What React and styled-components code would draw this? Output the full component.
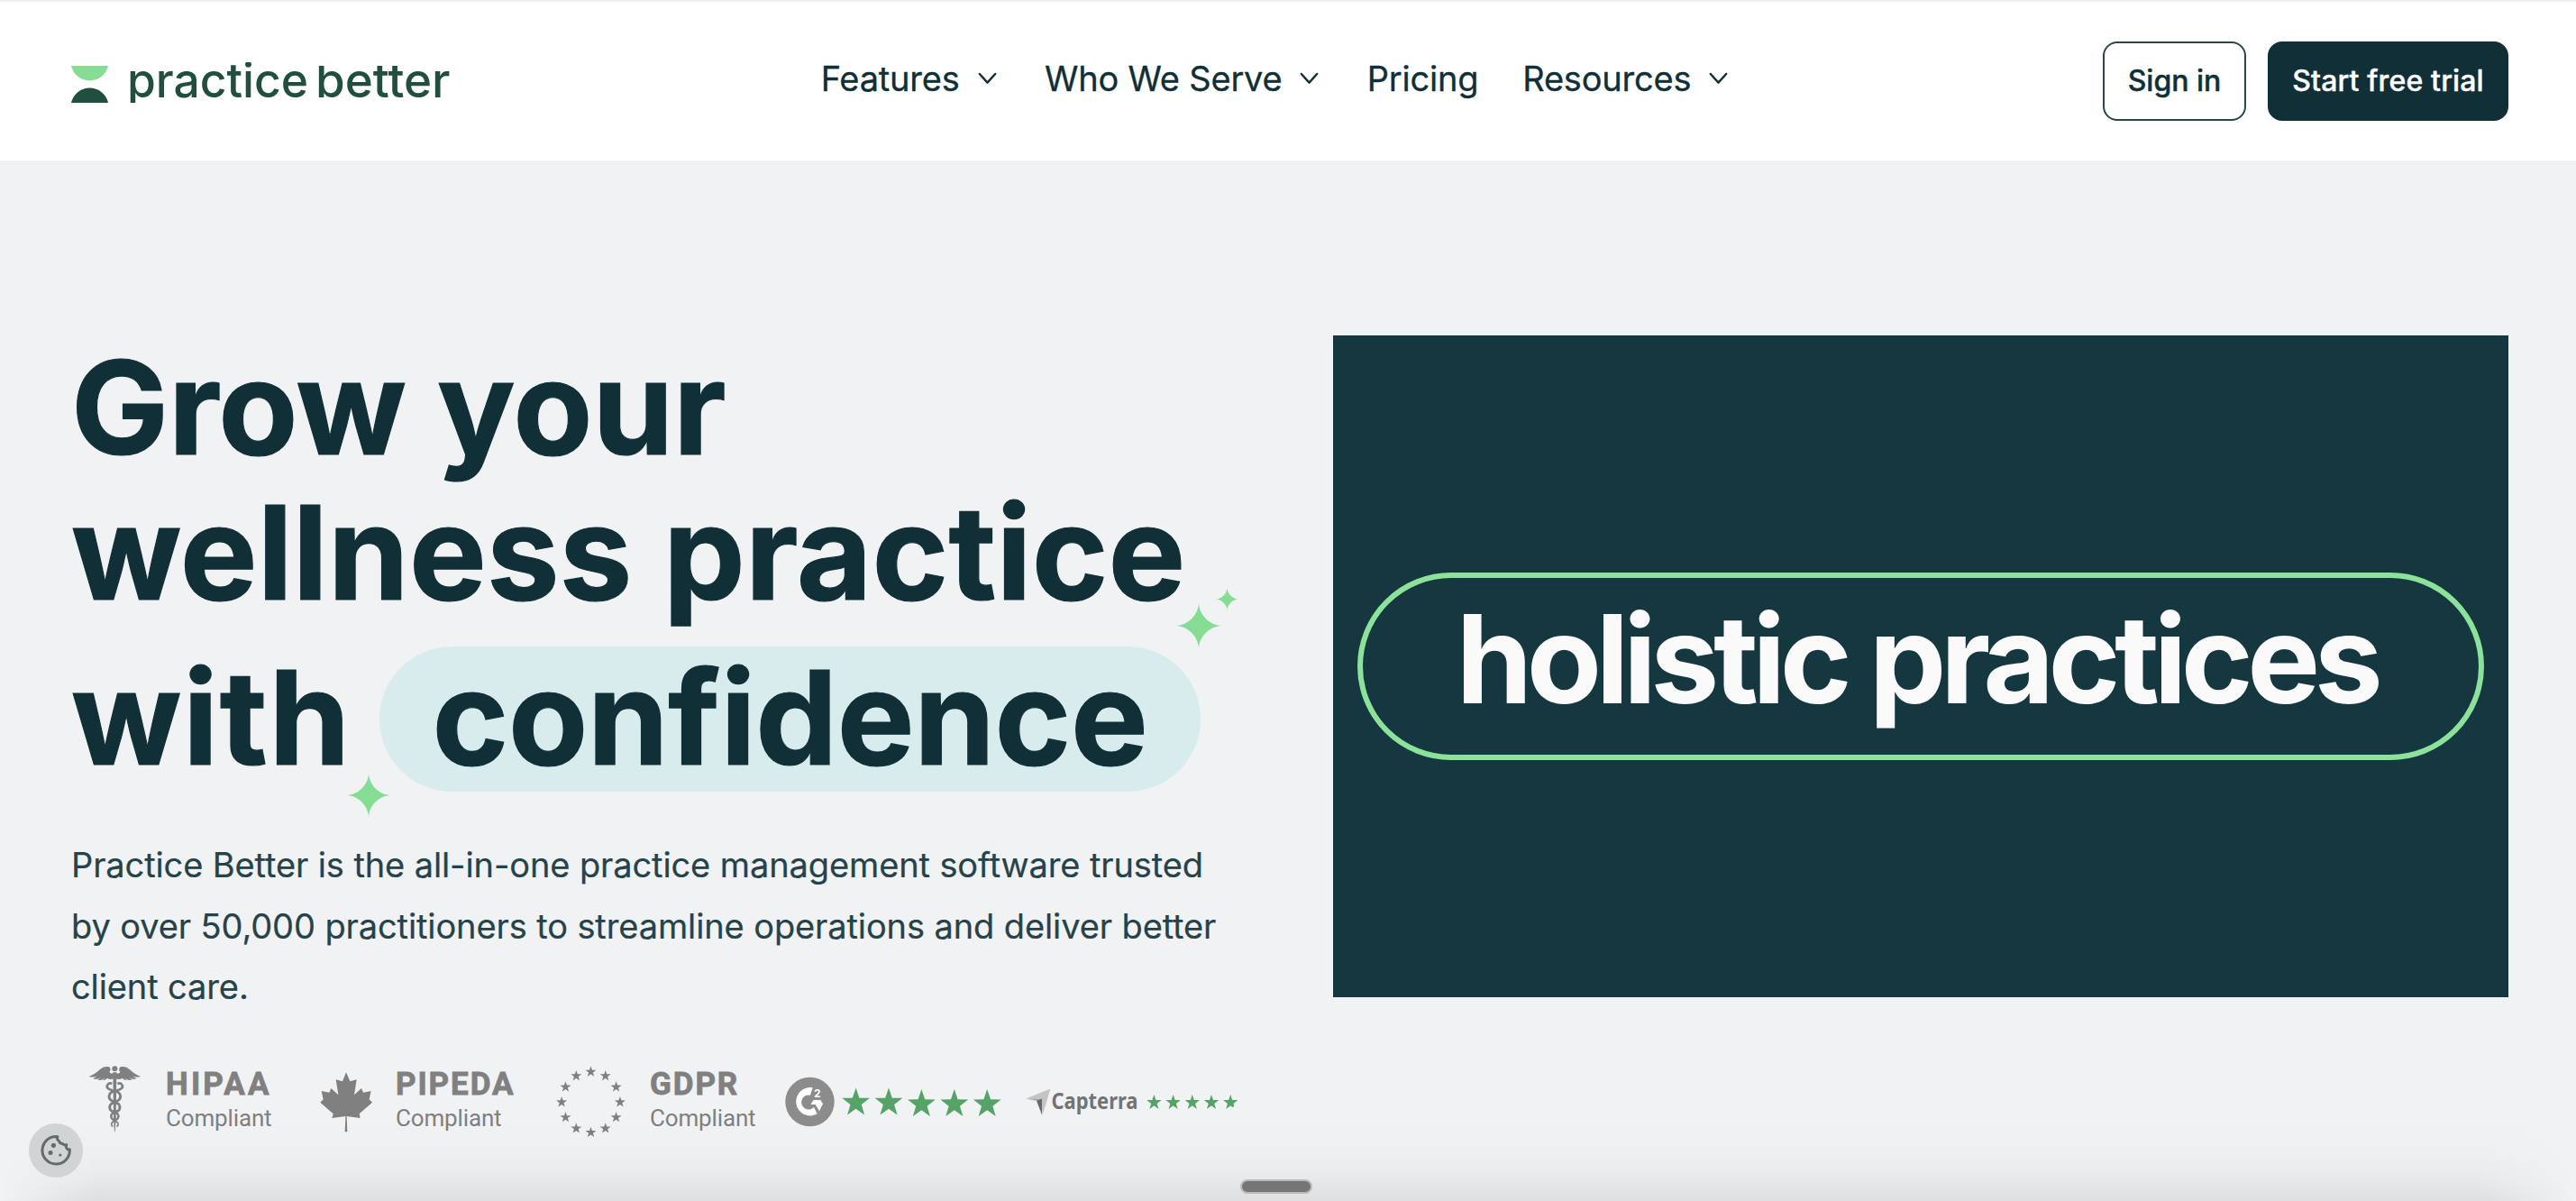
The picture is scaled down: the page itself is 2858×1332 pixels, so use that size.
import React from 'react';
import styled, { createGlobalStyle } from 'styled-components';

const ink = '#102f36';
const mint = '#84dd92';

const GlobalStyle = createGlobalStyle`
  *, *::before, *::after { box-sizing: border-box; }
  body {
    margin: 0;
    background: #f0f2f4;
    color: ${ink};
    font-family: Inter, 'Liberation Sans', sans-serif;
  }
`;

const Page = styled.div`
  position: relative;
  min-height: 1332px;
  overflow: hidden;
`;

const Header = styled.header`
  display: grid;
  grid-template-columns: 1fr auto 1fr;
  align-items: start;
  height: 178px;
  padding: 0 75px 0 79px;
  background: #ffffff;
  border-top: 2px solid #f0f0f1;
`;

const Logo = styled.a`
  display: flex;
  padding-top: 67px;

  svg { display: block; }
`;

const Nav = styled.nav`
  display: flex;
  gap: 53.3px;
  padding-top: 57px;
  transform: translateX(-17px);
`;

const NavItem = styled.a`
  display: flex;
  align-items: center;
  gap: 20px;
  margin-right: ${(p) => (p.$menu ? 0 : -4.5)}px;
  font-size: 38px;
  line-height: 56px;
  letter-spacing: -0.2px;
  -webkit-text-stroke: 0.3px currentColor;
  white-space: nowrap;

  svg { display: block; }
`;

const Actions = styled.div`
  display: flex;
  justify-content: flex-end;
  gap: 24px;
  padding-top: 44px;
`;

const Button = styled.button`
  width: ${(p) => p.$width}px;
  height: 88px;
  padding: 0 0 2px;
  border: 2px solid ${(p) => (p.$solid ? ink : '#2b454b')};
  border-radius: 16px;
  background: ${(p) => (p.$solid ? ink : '#ffffff')};
  color: ${(p) => (p.$solid ? '#ffffff' : ink)};
  font: 500 32px Inter, 'Liberation Sans', sans-serif;
  letter-spacing: ${(p) => (p.$solid ? 0.15 : 0)}px;
  -webkit-text-stroke: 0.4px currentColor;
  white-space: nowrap;
`;

const Hero = styled.main`
  display: grid;
  grid-template-columns: 1304px 1304px;
  justify-content: space-between;
  align-items: start;
  padding: 194px 75px 0 79px;
`;

const Copy = styled.section`
  display: flex;
  flex-direction: column;
`;

const Title = styled.h1`
  margin: -1px 0 0;
  font-size: 144px;
  font-weight: 700;
  line-height: 161px;
  -webkit-text-stroke: 1.2px currentColor;
  white-space: nowrap;
`;

const TitleLine = styled.span`
  display: block;
  letter-spacing: ${(p) => p.$track || 0}px;
`;

const LastLine = styled.span`
  display: grid;
  grid-template-columns: 342px 911px;
  margin-top: 24px;
  line-height: 158px;
`;

const Highlight = styled.span`
  position: relative;
  height: 161px;
  border-radius: 81px;
  background: #d8ecee;
  letter-spacing: -0.3px;
  text-align: center;
`;

const Sparkle = styled.svg`
  position: absolute;
  left: ${(p) => p.$x}px;
  top: ${(p) => p.$y}px;
  width: ${(p) => p.$size}px;
  height: ${(p) => p.$size}px;
`;

const Lead = styled.p`
  margin: 48px 0 0;
  color: #27434a;
  font-size: 38px;
  line-height: 67.5px;
  letter-spacing: -0.11px;
  -webkit-text-stroke: 0.2px currentColor;
  white-space: nowrap;
`;

const Badges = styled.div`
  display: flex;
  height: 80px;
  margin-top: 53px;
  padding-left: 19px;
  color: #808080;

  svg { display: block; flex: none; }
`;

const Badge = styled.div`
  display: flex;
  gap: ${(p) => p.$gap || 0}px;
  width: ${(p) => p.$width}px;
  margin-right: ${(p) => p.$after || 0}px;
  flex: none;
`;

const BadgeText = styled.div`
  padding-top: 1px;
  font-family: Roboto, 'Liberation Sans', sans-serif;
  white-space: nowrap;
`;

const BadgeName = styled.div`
  font-size: 35px;
  font-weight: 700;
  line-height: 40px;
  letter-spacing: ${(p) => p.$track}px;
  -webkit-text-stroke: 0.8px currentColor;
`;

const BadgeNote = styled.div`
  font-size: 26px;
  line-height: 34px;
  letter-spacing: -0.15px;
`;

const Panel = styled.section`
  display: flex;
  align-items: center;
  justify-content: center;
  height: 734px;
  background: #15373f;
`;

const Capsule = styled.div`
  width: 1250px;
  height: 208px;
  padding-right: 9px;
  border: 6px solid #8ce29b;
  border-radius: 104px;
  color: #fafafa;
  font-size: 136px;
  font-weight: 700;
  line-height: 179px;
  letter-spacing: -6.5px;
  text-align: center;
  white-space: nowrap;
`;

const Shade = styled.div`
  position: absolute;
  inset: auto 0 0 0;
  height: 92px;
  background: linear-gradient(
    to bottom,
    rgba(0, 0, 0, 0) 0%,
    rgba(0, 0, 0, 0.012) 45%,
    rgba(0, 0, 0, 0.035) 75%,
    rgba(0, 0, 0, 0.08) 100%
  );
  mask-image: linear-gradient(to right, transparent 0, #000 110px, #000 calc(100% - 110px), transparent 100%);
`;

const Grip = styled.div`
  position: absolute;
  left: 1376px;
  bottom: 8px;
  width: 80px;
  height: 16px;
  border: 2px solid #b9babb;
  border-radius: 8px;
  background: #757575;
`;

const CookieButton = styled.button`
  position: absolute;
  left: 32px;
  bottom: 26px;
  display: flex;
  align-items: center;
  justify-content: center;
  width: 60px;
  height: 60px;
  padding: 0;
  border: 0;
  border-radius: 50%;
  background: #d0d4d5;
`;

const Chevron = () => (
  <svg width="21" height="14" viewBox="0 0 21 14" fill="none" stroke={ink} strokeWidth="2.4" strokeLinecap="round" strokeLinejoin="round">
    <path d="M1.8 2 10.5 11.6 19.2 2" />
  </svg>
);

const Star4 = (props) => (
  <Sparkle viewBox="0 0 50 50" {...props}>
    <path fill={mint} d="M25 0C25.6 13 37 24.4 50 25C37 25.6 25.6 37 25 50C24.4 37 13 25.6 0 25C13 24.4 24.4 13 25 0Z" />
  </Sparkle>
);

const starPoints = (cx, cy, r, ry = r) =>
  Array.from({ length: 10 }, (_, i) => {
    const k = i % 2 ? 0.4 : 1;
    const a = -Math.PI / 2 + (i * Math.PI) / 5;
    return `${(cx + k * r * Math.cos(a)).toFixed(2)},${(cy + k * ry * Math.sin(a)).toFixed(2)}`;
  }).join(' ');

const BrandMark = () => (
  <svg width="424" height="48" viewBox="0 0 424 48">
    <path fill={mint} d="M0 4H41A21 21 0 0 1 0 4Z" />
    <path fill="#204e3f" d="M0 45A21 21 0 0 1 41 45Z" />
    <clipPath id="brandClip">
      <path d="M60 0H264V4H424V45H60Z" />
    </clipPath>
    <g clipPath="url(#brandClip)" fill="#204e3f" fontFamily="Inter, sans-serif" fontSize="53" fontWeight="500">
      <text x="62" y="39" textLength="201" lengthAdjust="spacingAndGlyphs">practice</text>
      <text x="271" y="39" textLength="149.5" lengthAdjust="spacingAndGlyphs">better</text>
    </g>
  </svg>
);

const Caduceus = () => (
  <svg width="58" height="80" viewBox="234 126 174 240" fill="#808080">
    <circle cx="322" cy="136" r="9" />
    <path d="M316 148H328L326 300L323 346H321L318 300Z" />
    {[1, -1].map((s) => (
      <g key={s} transform={s === 1 ? undefined : 'translate(644 0) scale(-1 1)'}>
        <path d="M236 162C252 156 262 149 272 139C281 130 293 127 303 130C309 134 309 142 304 147C307 153 315 151 320 151V168C311 173 303 172 297 167C293 171 288 174 282 174L290 165C281 173 274 175 265 174L278 163C268 171 260 172 250 169L266 159C256 164 247 165 236 162Z" />
        <path d="M313 186C300 180 291 194 300 202C307 208 319 206 322 213" fill="none" stroke="#808080" strokeWidth="8" />
        <path d="M322 311C311 312 307 320 315 329" fill="none" stroke="#808080" strokeWidth="5" />
      </g>
    ))}
    <g fill="none" stroke="#808080" strokeWidth="9">
      <ellipse cx="322" cy="228" rx="19" ry="17" />
      <ellipse cx="322" cy="264" rx="17" ry="15" />
      <ellipse cx="322" cy="294" rx="12" ry="12" strokeWidth="8" />
    </g>
  </svg>
);

const MapleLeaf = () => (
  <svg width="58" height="80" viewBox="1003 126 174 240" fill="#808080">
    <path d="M1090 148L1103 178L1125 172L1117 223L1141 201L1147 215L1173 210L1167 238L1177 248L1134 286L1137 300L1092 294L1094 346H1086L1088 294L1043 300L1047 286L1004 248L1014 238L1008 210L1034 215L1040 201L1064 223L1056 172L1078 178Z" />
  </svg>
);

const StarRing = () => (
  <svg width="78" height="80" viewBox="0 0 78 80" fill="#808080">
    {Array.from({ length: 12 }, (_, i) => {
      const a = (i * Math.PI) / 6;
      return <polygon key={i} points={starPoints(38.5 + 32.4 * Math.sin(a), 40.4 - 33.6 * Math.cos(a), 6.3)} />;
    })}
  </svg>
);

const G2Rating = () => (
  <svg width="240" height="80" viewBox="0 0 240 80">
    <circle cx="27.5" cy="40" r="27.2" fill="#8c8c8c" />
    <g transform="translate(-11 -2) scale(0.3333)" fill="#ffffff">
      <path d="M125 79A47 47 0 1 0 140 166L129 144A24 24 0 1 1 117 104Z" />
      <path d="M128 120H151L159 133L147 157L134 135H118Z" />
      <text x="129" y="111" fontFamily="Inter, sans-serif" fontSize="36" fontWeight="700">2</text>
    </g>
    <g fill="#55a367">
      {[0, 1, 2, 3, 4].map((i) => (
        <polygon key={i} points={starPoints(78.6 + i * 36.4, i < 2 ? 41 : 42.6, 16.2, 16.6)} />
      ))}
    </g>
  </svg>
);

const CapterraRating = () => (
  <svg width="238" height="80" viewBox="0 0 238 80">
    <path fill="#c4c4c4" d="M0 36.5L27.5 25.5L18.5 55L17.5 36.5Z" />
    <path fill="#a9a9a9" d="M0 36.5L18 36.5L12.5 39Z" />
    <path fill="#686868" d="M12 38.8L18 36.5L18 54.5Z" />
    <text x="28.5" y="48" textLength="96" lengthAdjust="spacingAndGlyphs" fill="#737373" fontFamily="'Noto Sans', sans-serif" fontSize="24.5" fontWeight="700">Capterra</text>
    <g fill="#55a367">
      {[0, 1, 2, 3].map((i) => (
        <polygon key={i} points={starPoints(142.4 + i * 21.2, 40.8, 8.6, 8.9)} />
      ))}
      <clipPath id="partialStar"><path d="M214 20H240V38L222 52H214Z" /></clipPath>
      <polygon clipPath="url(#partialStar)" points={starPoints(227.2, 40.8, 8.6, 8.9)} />
    </g>
  </svg>
);

const CookieIcon = () => (
  <svg width="34" height="34" viewBox="0 0 34 34" fill="none" stroke="#666a6b" strokeWidth="3">
    <path d="M18.8 1.7A15.2 15.2 0 1 0 32.3 15.8C30.6 16.3 29 15.4 28.5 13.7C28.3 12.9 28.3 11.6 28.8 10.5C27.3 11.3 25.5 10.6 24.8 9.6C22.4 9.6 20.8 8 20.3 6.2C18.6 5.2 18 3.6 18.8 1.7Z" strokeLinejoin="round" />
    <g fill="#666a6b" stroke="none">
      <circle cx="14.4" cy="11.3" r="2.6" />
      <circle cx="11" cy="19.4" r="2.5" />
      <circle cx="21.8" cy="22" r="1.6" />
    </g>
  </svg>
);

const navItems = [
  { label: 'Features', menu: true },
  { label: 'Who We Serve', menu: true },
  { label: 'Pricing', menu: false },
  { label: 'Resources', menu: true },
];

const Compliance = ({ name, track, icon, gap, width, after }) => (
  <Badge $gap={gap} $width={width} $after={after}>
    {icon}
    <BadgeText>
      <BadgeName $track={track}>{name}</BadgeName>
      <BadgeNote>Compliant</BadgeNote>
    </BadgeText>
  </Badge>
);

export default function App() {
  return (
    <Page>
      <GlobalStyle />
      <Header>
        <Logo><BrandMark /></Logo>
        <Nav>
          {navItems.map((item) => (
            <NavItem key={item.label} $menu={item.menu}>
              {item.label}
              {item.menu && <Chevron />}
            </NavItem>
          ))}
        </Nav>
        <Actions>
          <Button $width={159}>Sign in</Button>
          <Button $width={267} $solid>Start free trial</Button>
        </Actions>
      </Header>

      <Hero>
        <Copy>
          <Title>
            <TitleLine>Grow your</TitleLine>
            <TitleLine $track={0.2}>wellness practice</TitleLine>
            <LastLine>
              <TitleLine $track={1.7}>with</TitleLine>
              <Highlight>
                confidence
                <Star4 $x={884} $y={-48} $size={50} />
                <Star4 $x={928} $y={-65} $size={25} />
                <Star4 $x={-36} $y={141} $size={48} />
              </Highlight>
            </LastLine>
          </Title>
          <Lead>
            Practice Better is the all-in-one practice management software trusted
            <br />
            by over 50,000 practitioners to streamline operations and deliver better
            <br />
            client care.
          </Lead>
          <Badges>
            <Compliance name="HIPAA" track={3.2} icon={<Caduceus />} gap={28} width={204} after={53} />
            <Compliance name="PIPEDA" track={1.9} icon={<MapleLeaf />} gap={26} width={216} after={46} />
            <Compliance name="GDPR" track={1.9} icon={<StarRing />} gap={26} width={223} after={31} />
            <Badge $width={240} $after={27}><G2Rating /></Badge>
            <Badge $width={238}><CapterraRating /></Badge>
          </Badges>
        </Copy>
        <Panel>
          <Capsule>holistic practices</Capsule>
        </Panel>
      </Hero>

      <Shade />
      <Grip />
      <CookieButton aria-label="Cookie settings"><CookieIcon /></CookieButton>
    </Page>
  );
}
